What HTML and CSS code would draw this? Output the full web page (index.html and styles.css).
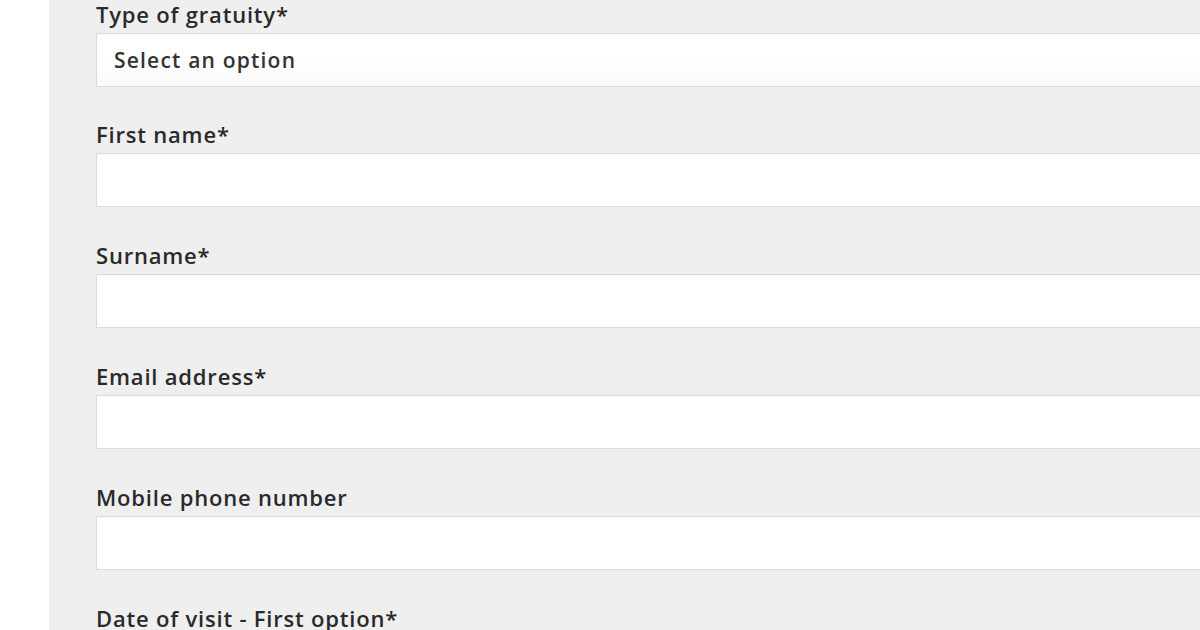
FILE: index.html
```html
<!DOCTYPE html>
<html lang="en">
<head>
<meta charset="utf-8">
<title>Gratuity form</title>
<link rel="stylesheet" href="styles.css">
</head>
<body>
<div class="page">
  <div class="side"></div>
  <main class="main">
    <form class="form">
      <div class="field field-first">
        <label class="label">Type of gratuity*</label>
        <div class="select">Select an option</div>
      </div>
      <div class="field">
        <label class="label">First name*</label>
        <div class="input"></div>
      </div>
      <div class="field">
        <label class="label">Surname*</label>
        <div class="input"></div>
      </div>
      <div class="field">
        <label class="label">Email address*</label>
        <div class="input"></div>
      </div>
      <div class="field">
        <label class="label">Mobile phone number</label>
        <div class="input"></div>
      </div>
      <div class="field">
        <label class="label">Date of visit - First option*</label>
        <div class="input"></div>
      </div>
    </form>
  </main>
</div>
</body>
</html>
```
FILE: styles.css
```css
html, body {
  margin: 0;
  padding: 0;
  height: 100%;
  overflow: hidden;
  background: #ffffff;
}
.page {
  display: flex;
  height: 630px;
}
.side {
  width: 49px;
  flex: none;
  background: #ffffff;
}
.main {
  flex: 1;
  background: #efefef;
  padding-left: 47px;
  overflow: hidden;
}
.form {
  padding-top: 1px;
  width: 1200px;
}
.field {
  display: flex;
  flex-direction: column;
  margin-bottom: 35px;
}
.field-first {
  margin-bottom: 34px;
}
.label {
  font-family: "Open Sans", sans-serif;
  font-weight: 600;
  font-size: 22px;
  line-height: 26px;
  letter-spacing: 0.8px;
  color: #2a2a2a;
  margin-bottom: 6px;
}
.select, .input {
  height: 52px;
  border: 1px solid #dcdcdc;
  box-sizing: content-box;
  box-shadow: inset 0 1px 1px rgba(0, 0, 0, 0.03);
}
.select {
  background: linear-gradient(#ffffff 45%, #fafafa);
  font-family: "Open Sans", sans-serif;
  font-weight: 600;
  font-size: 21px;
  letter-spacing: 1.2px;
  color: #333333;
  line-height: 52px;
  padding-left: 17px;
}
.input {
  background: #ffffff;
}
```
